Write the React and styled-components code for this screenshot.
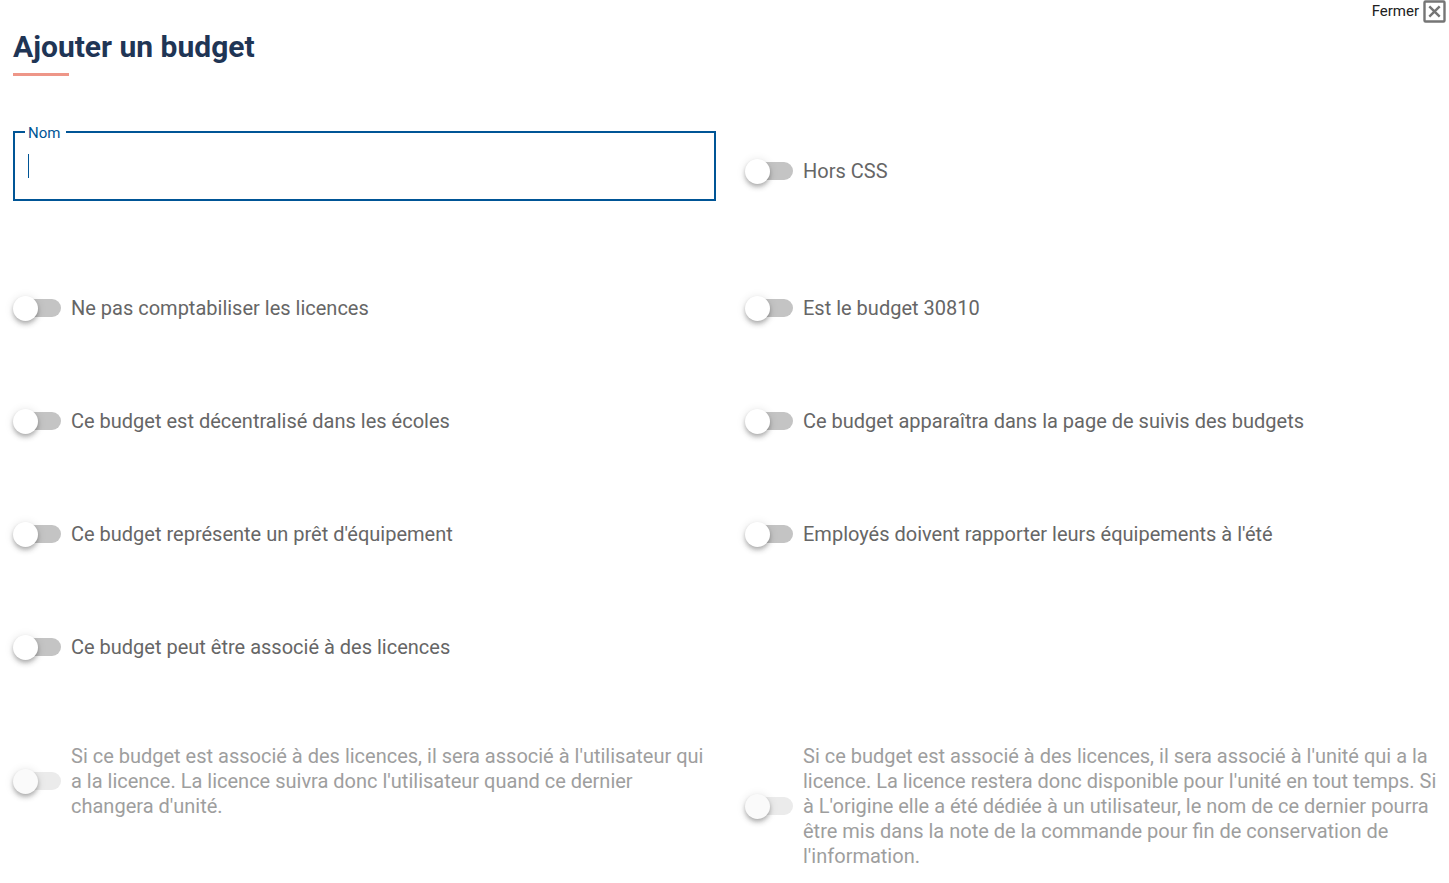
import React, { useState } from "react";
import styled, { createGlobalStyle } from "styled-components";

const toggles = [
  { id: "noLicenceCount", text: "Ne pas comptabiliser les licences" },
  { id: "is30810", text: "Est le budget 30810" },
  { id: "decentralized", text: "Ce budget est décentralisé dans les écoles" },
  {
    id: "tracked",
    text: "Ce budget apparaîtra dans la page de suivis des budgets",
  },
  { id: "loan", text: "Ce budget représente un prêt d'équipement" },
  {
    id: "summerReturn",
    text: "Employés doivent rapporter leurs équipements à l'été",
  },
  { id: "licences", text: "Ce budget peut être associé à des licences" },
];

const licenceToggles = [
  {
    id: "licenceUser",
    text: "Si ce budget est associé à des licences, il sera associé à l'utilisateur qui a la licence. La licence suivra donc l'utilisateur quand ce dernier changera d'unité.",
  },
  {
    id: "licenceUnit",
    text: "Si ce budget est associé à des licences, il sera associé à l'unité qui a la licence. La licence restera donc disponible pour l'unité en tout temps. Si à L'origine elle a été dédiée à un utilisateur, le nom de ce dernier pourra être mis dans la note de la commande pour fin de conservation de l'information.",
  },
];

const Toggle = ({ id, text, checked, disabled, onToggle }) => {
  return (
    <ToggleRow>
      <Switch
        id={id}
        type="checkbox"
        role="switch"
        checked={checked}
        disabled={disabled}
        onChange={() => onToggle(id)}
      />
      <ToggleLabel htmlFor={id} $disabled={disabled}>
        {text}
      </ToggleLabel>
    </ToggleRow>
  );
};

const App = () => {
  const [open, setOpen] = useState(true);
  const [name, setName] = useState("");
  const [values, setValues] = useState({});

  const handleToggle = (id) => {
    setValues((values) => ({ ...values, [id]: !values[id] }));
  };

  if (!open) return <GlobalStyle />;

  return (
    <>
      <GlobalStyle />
      <TopBar>
        <CloseButton type="button" onClick={() => setOpen(false)}>
          Fermer
          <svg width="23" height="23" viewBox="0 0 23 23" fill="none">
            <rect
              x="1.5"
              y="1.5"
              width="20"
              height="20"
              rx="1"
              stroke="#757575"
              strokeWidth="2.4"
            />
            <path
              d="M6.3 6.3L16.7 16.7M16.7 6.3L6.3 16.7"
              stroke="#757575"
              strokeWidth="2.4"
            />
          </svg>
        </CloseButton>
      </TopBar>
      <Form onSubmit={(e) => e.preventDefault()}>
        <Title>Ajouter un budget</Title>
        <NameGrid>
          <Field>
            <Legend>
              <label htmlFor="name">Nom</label>
            </Legend>
            <InputWrap>
              <NameInput
                id="name"
                autoComplete="off"
                value={name}
                $empty={!name}
                onChange={(e) => setName(e.target.value)}
              />
              {!name && <Caret />}
            </InputWrap>
          </Field>
          <Toggle
            id="horsCss"
            text="Hors CSS"
            checked={!!values.horsCss}
            onToggle={handleToggle}
          />
        </NameGrid>
        <ToggleGrid>
          {toggles.map((toggle) => (
            <Toggle
              key={toggle.id}
              {...toggle}
              checked={!!values[toggle.id]}
              onToggle={handleToggle}
            />
          ))}
        </ToggleGrid>
        <LicenceGrid>
          {licenceToggles.map((toggle) => (
            <Toggle
              key={toggle.id}
              {...toggle}
              checked={!!values[toggle.id]}
              disabled={!values.licences}
              onToggle={handleToggle}
            />
          ))}
        </LicenceGrid>
      </Form>
    </>
  );
};

const GlobalStyle = createGlobalStyle`
  * {
    box-sizing: border-box;
  }

  body {
    margin: 0;
    background: #fff;
    font-family: Roboto, sans-serif;
  }
`;

const TopBar = styled.div`
  display: flex;
  justify-content: flex-end;
  padding-right: 3px;
`;

const CloseButton = styled.button`
  display: flex;
  gap: 4px;
  padding: 0;
  border: none;
  background: none;
  color: #212121;
  font-family: inherit;
  font-size: 15px;
  line-height: 22px;
  cursor: pointer;
`;

const Form = styled.form`
  padding: 6px 1px 14px 13px;
`;

const Title = styled.h1`
  margin: 0;
  color: #1f3555;
  font-size: 30px;
  font-weight: 700;
  line-height: 36px;

  &::after {
    content: "";
    display: block;
    width: 56px;
    height: 3px;
    margin-top: 8px;
    background: #ee9688;
  }
`;

const Grid = styled.div`
  display: grid;
  grid-template-columns: 1fr 1fr;
  column-gap: 29px;
`;

const NameGrid = styled(Grid)`
  margin-top: 45px;
  align-items: center;

  > :last-child {
    padding-top: 21px;
  }
`;

const ToggleGrid = styled(Grid)`
  margin-top: 95px;
  row-gap: 88px;
`;

const LicenceGrid = styled(Grid)`
  margin-top: 84px;
  align-items: start;
`;

const Field = styled.fieldset`
  min-width: 0;
  margin: 0;
  padding: 0 13px 10px;
  border: 2px solid #005596;
`;

const Legend = styled.legend`
  margin-left: -3px;
  padding: 2px 6px 0 3px;
  color: #005596;
  font-size: 15px;
  line-height: 20px;
`;

const InputWrap = styled.div`
  position: relative;
`;

const NameInput = styled.input`
  display: block;
  width: 100%;
  height: 46px;
  padding: 0;
  border: none;
  outline: none;
  background: none;
  color: #212121;
  caret-color: ${(props) => (props.$empty ? "transparent" : "#005596")};
  font-family: inherit;
  font-size: 20px;
`;

const Caret = styled.span`
  position: absolute;
  top: 11px;
  left: 0;
  width: 1px;
  height: 24px;
  background: #005596;
  pointer-events: none;
`;

const ToggleRow = styled.div`
  display: flex;
  align-items: center;
  gap: 10px;
`;

const Switch = styled.input`
  appearance: none;
  flex: none;
  display: flex;
  position: relative;
  width: 48px;
  height: 25px;
  margin: 0;
  cursor: pointer;

  &::before {
    content: "";
    width: 38px;
    height: 18px;
    margin: 3px 0 0 10px;
    border-radius: 9px;
    background: #c4c4c4;
  }

  &::after {
    content: "";
    position: absolute;
    left: 0;
    width: 25px;
    height: 25px;
    border-radius: 50%;
    background: #fff;
    box-shadow:
      0 2px 4px -1px rgba(0, 0, 0, 0.2),
      0 4px 5px 0 rgba(0, 0, 0, 0.14),
      0 1px 10px 0 rgba(0, 0, 0, 0.12);
  }

  &:checked::before {
    background: #80aacb;
  }

  &:checked::after {
    left: 23px;
    background: #005596;
  }

  &:disabled {
    cursor: default;
  }

  &:disabled::before {
    background: #ebebeb;
  }

  &:disabled::after {
    background: #fafafa;
  }
`;

const ToggleLabel = styled.label`
  color: ${(props) => (props.$disabled ? "#9e9e9e" : "#666")};
  font-size: 20px;
  line-height: 25px;
`;

export default App;
